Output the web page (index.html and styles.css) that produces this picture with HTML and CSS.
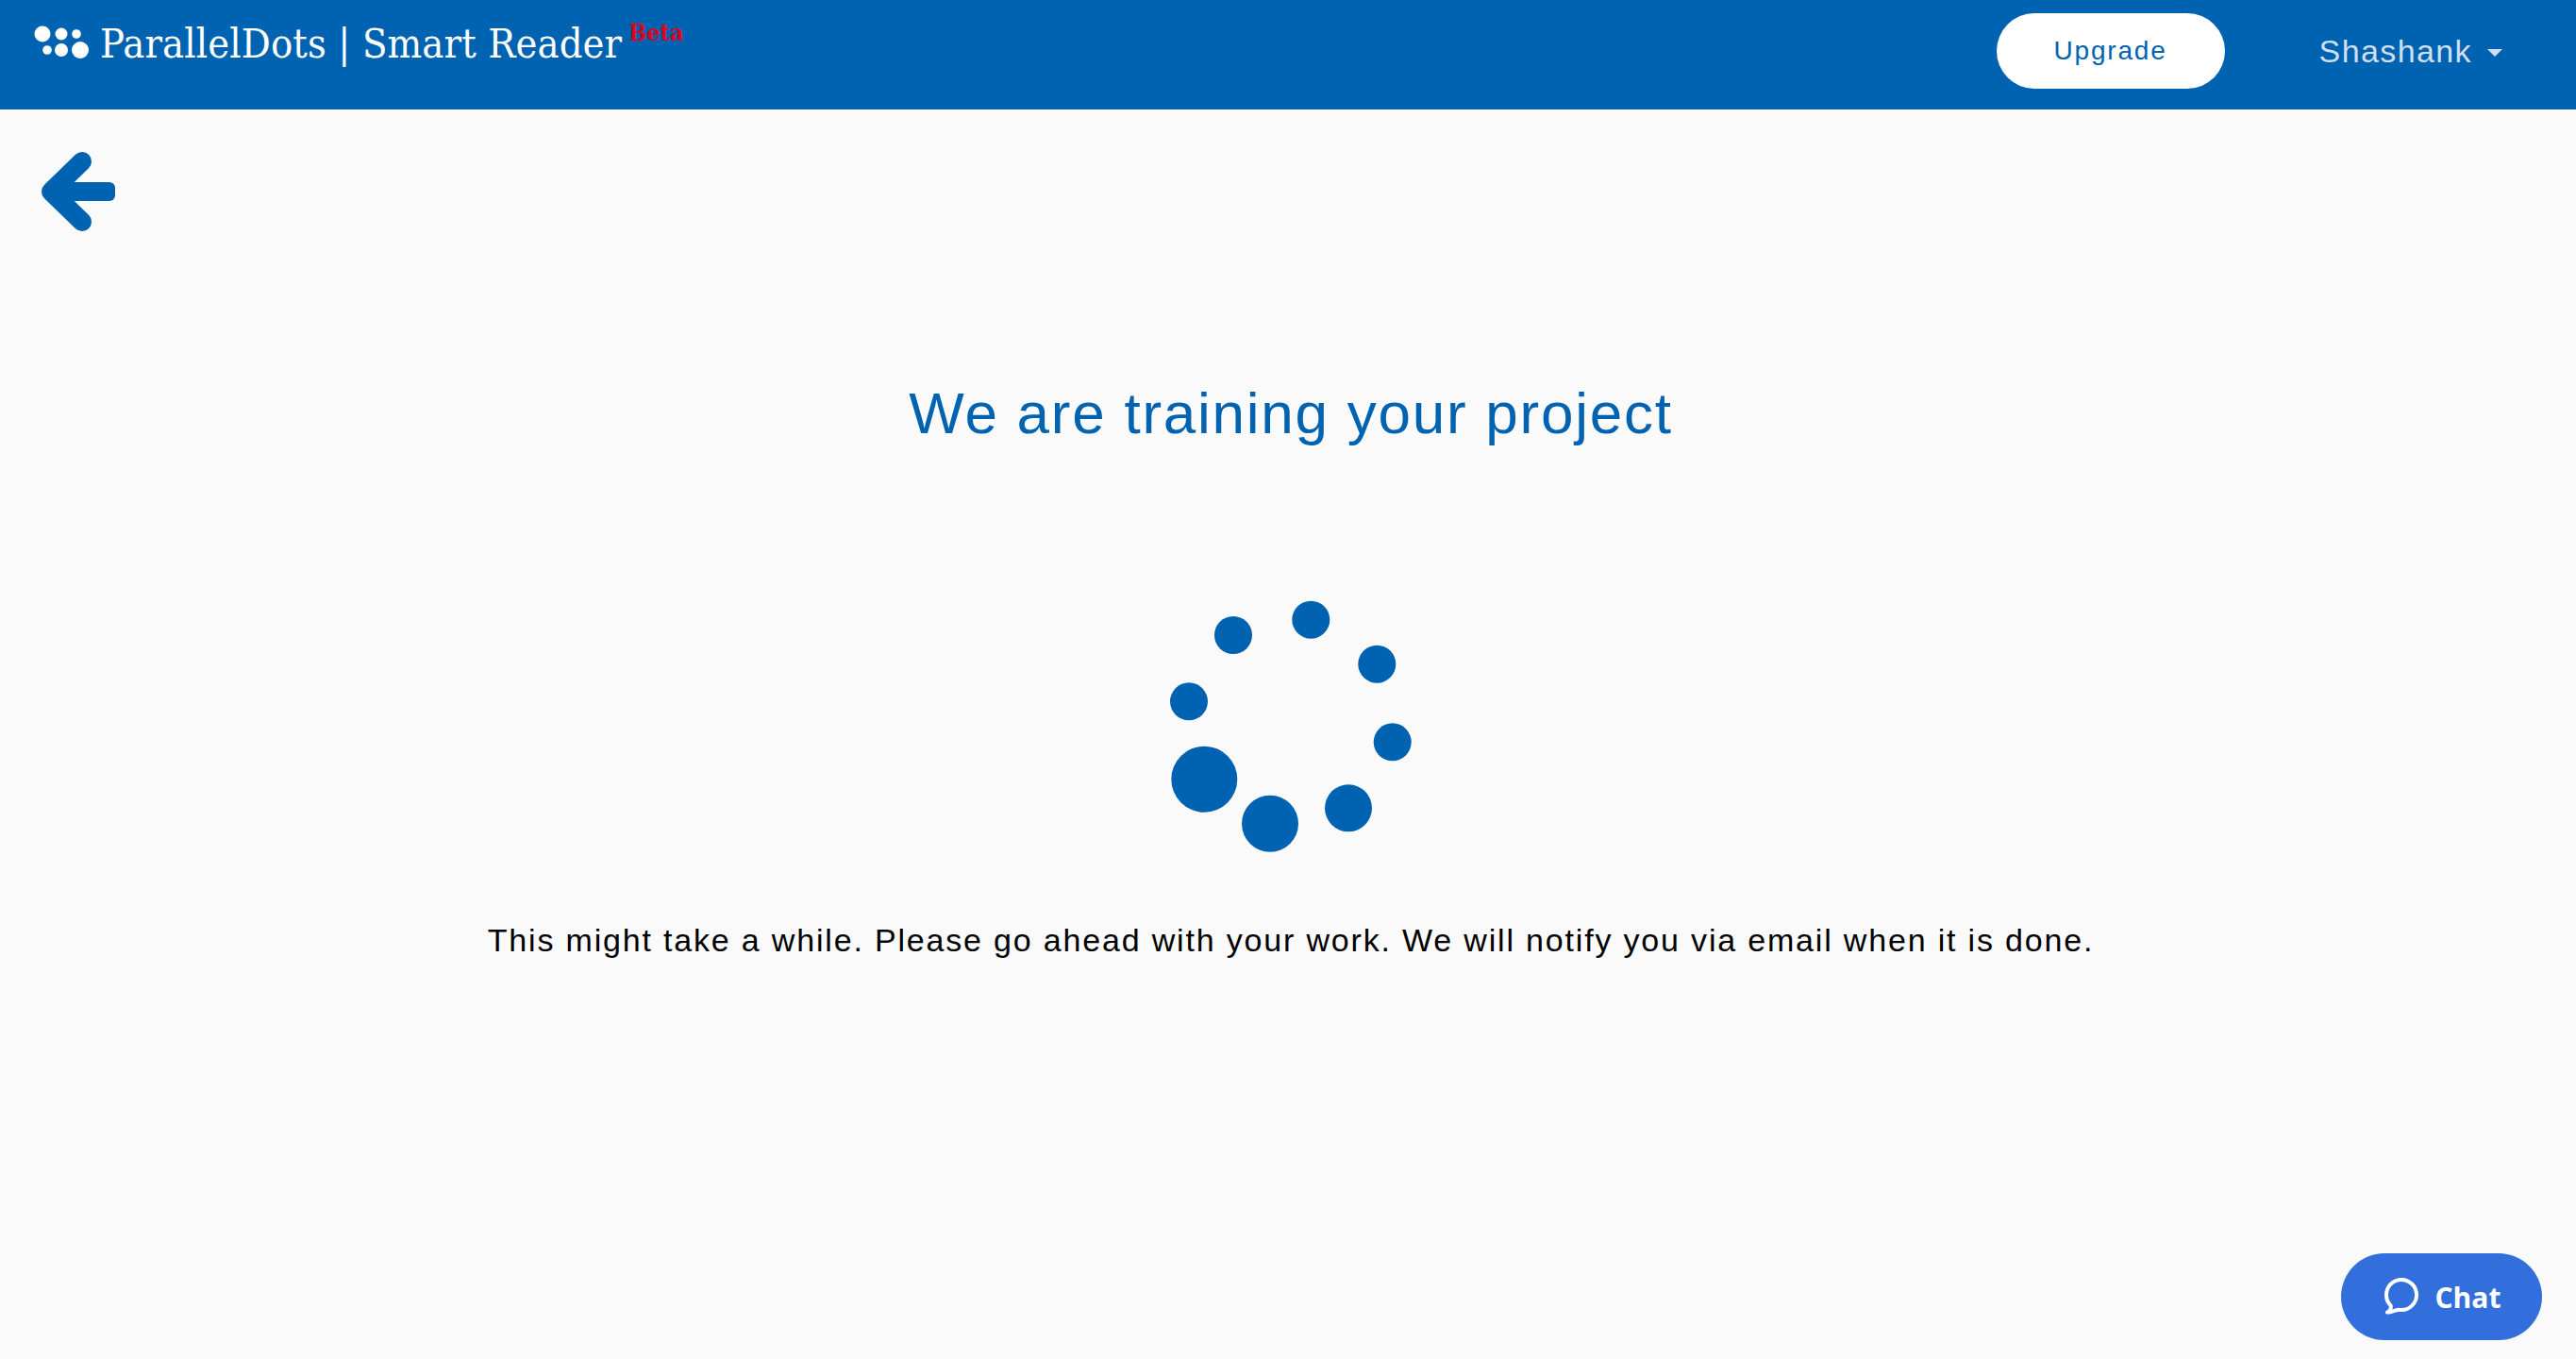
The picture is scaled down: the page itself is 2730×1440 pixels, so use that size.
FILE: index.html
```html
<!DOCTYPE html>
<html>
<head>
    <title>ParallelDots | Smart Reader</title>
    <link rel="stylesheet" href="styles.css">
</head>
<body>
    <header class="navbar">
        <a class="brand">
            <svg class="brand-dots" viewBox="0 0 64 46" width="64" height="46">
                <circle cx="13" cy="16" r="8.5"/>
                <circle cx="33" cy="16" r="6.5"/>
                <circle cx="49" cy="16" r="4.8"/>
                <circle cx="18" cy="33" r="4.8"/>
                <circle cx="33" cy="33" r="7"/>
                <circle cx="53" cy="33" r="9"/>
            </svg>
            <span class="brand-name">ParallelDots | Smart Reader</span>
            <span class="brand-beta">Beta</span>
        </a>
        <div class="nav-right">
            <button class="upgrade-btn">Upgrade</button>
            <div class="user-menu">
                <span>Shashank</span>
                <span class="caret"></span>
            </div>
        </div>
    </header>

    <main class="content">
        <a class="back-link">
            <svg viewBox="0 0 90 96" width="90" height="96">
                <rect class="back-shaft" x="17" y="38" width="65" height="20" rx="6"/>
                <path class="back-arrow" d="M47 16 L14 48 L47 80"/>
            </svg>
        </a>
        <h1 class="title">We are training your project</h1>
        <svg class="spinner" viewBox="0 0 260 275" width="260" height="275">
            <circle cx="149.3" cy="26.7" r="20"/>
            <circle cx="219.3" cy="73.7" r="20"/>
            <circle cx="235.7" cy="156.3" r="20"/>
            <circle cx="189" cy="226.3" r="25"/>
            <circle cx="106" cy="242.7" r="30"/>
            <circle cx="36.3" cy="195.7" r="35"/>
            <circle cx="20" cy="113.3" r="20"/>
            <circle cx="67" cy="43" r="20"/>
        </svg>
        <p class="message">This might take a while. Please go ahead with your work. We will notify you via email when it is done.</p>
    </main>

    <button class="chat-btn">
        <svg viewBox="0 0 40 40" width="40" height="40">
            <path class="chat-icon" d="M5 36.500 C8 35 9.500 32 8.500 29.100 A16 16 0 1 1 17 33.700 C13 34 9 37 5 36.500 Z"/>
        </svg>
        <span>Chat</span>
    </button>
</body>
</html>
```

FILE: styles.css
```css
body {
    margin: 0;
    min-height: 1440px;
    background: #fafafa;
    font-family: "Liberation Sans", Arial, sans-serif;
    overflow: hidden;
}

.navbar {
    height: 116px;
    background: #0063b1;
    display: flex;
    justify-content: space-between;
    align-items: flex-start;
    padding: 0 78px 0 32px;
}

.brand {
    display: flex;
    align-items: flex-start;
    color: #ffffff;
}

.brand-dots {
    margin-top: 20px;
    fill: #ffffff;
    margin-right: 10px;
}

.brand-name {
    font-family: "DejaVu Serif Condensed", "DejaVu Serif", serif;
    font-stretch: condensed;
    font-size: 43px;
    line-height: 50px;
    margin-top: 21px;
    letter-spacing: 0.13px;
    white-space: nowrap;
}

.brand-beta {
    font-family: "DejaVu Serif Condensed", "DejaVu Serif", serif;
    font-stretch: condensed;
    font-weight: bold;
    font-size: 25px;
    line-height: 24px;
    margin: 23px 0 0 7px;
    color: #e0001b;
}

.nav-right {
    display: flex;
    align-items: center;
    height: 108px;
}

.upgrade-btn {
    width: 242px;
    height: 80px;
    border: none;
    border-radius: 40px;
    background: #ffffff;
    color: #0063b1;
    font-family: "Liberation Sans", Arial, sans-serif;
    font-size: 28px;
    letter-spacing: 1.8px;
    margin-right: 100px;
}

.user-menu {
    display: flex;
    align-items: center;
    color: #cfdfef;
    font-size: 34px;
    letter-spacing: 1.4px;
}

.caret {
    width: 0;
    height: 0;
    margin-left: 16px;
    margin-top: 4px;
    border-left: 8px solid transparent;
    border-right: 8px solid transparent;
    border-top: 8px solid #cfdfef;
}

.content {
    display: flex;
    flex-direction: column;
    align-items: center;
    padding-left: 6px;
}

.back-link {
    align-self: flex-start;
    display: block;
    height: 96px;
    margin: 39px 0 0 34px;
}

.back-arrow {
    fill: none;
    stroke: #0063b1;
    stroke-width: 20;
    stroke-linecap: round;
    stroke-linejoin: round;
}

.back-shaft {
    fill: #0063b1;
}

.title {
    margin: 151px 0 0 0;
    color: #0063b1;
    font-size: 62px;
    line-height: 72px;
    font-weight: normal;
    letter-spacing: 1.75px;
}

.spinner {
    display: block;
    margin: 156px 0 0 4px;
    fill: #0063b1;
}

.message {
    margin: 71px 0 0 0;
    font-size: 34px;
    line-height: 40px;
    letter-spacing: 1.82px;
    color: #000000;
}

.chat-btn {
    position: fixed;
    left: 2481px;
    top: 1328px;
    width: 213px;
    height: 92px;
    border: none;
    border-radius: 46px;
    background: #326fdc;
    color: #ffffff;
    display: flex;
    align-items: center;
    justify-content: center;
    gap: 16px;
    font-family: "Open Sans", sans-serif;
    font-weight: bold;
    font-size: 30px;
}

.chat-icon {
    fill: none;
    stroke: #ffffff;
    stroke-width: 4;
    stroke-linejoin: round;
}
```
